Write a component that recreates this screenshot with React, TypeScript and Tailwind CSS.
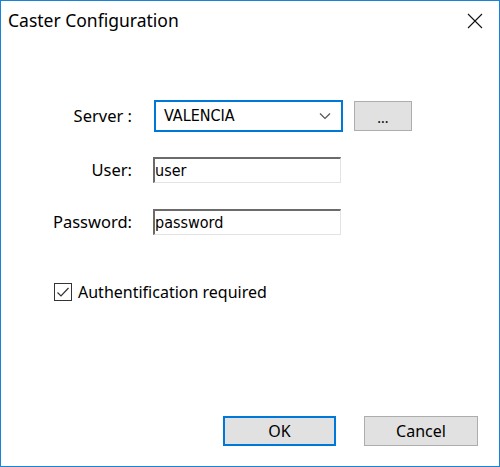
import React from 'react';

const ui = { fontFamily: '"Noto Sans", "Open Sans", sans-serif' };
const field = { fontFamily: '"DejaVu Sans Condensed", "Liberation Sans", sans-serif' };

const Label: React.FC<{ text: string }> = ({ text }) => (
  <div className="w-[92px] text-right text-[16.5px] text-black leading-none" style={ui}>
    {text}
  </div>
);

const TextBox: React.FC<{ value: string }> = ({ value }) => (
  <div
    className="w-[188px] h-[26px] bg-white border-t-2 border-l-2 border-b border-r border-t-[#6b6b6b] border-l-[#6b6b6b] border-b-[#e3e3e3] border-r-[#e3e3e3] flex items-center text-[16px] text-black"
    style={field}
  >
    {value}
  </div>
);

export default function App() {
  return (
    <div className="w-[500px] h-[467px] bg-white border border-[#1883d7] flex flex-col select-none">
      {/* Title bar */}
      <div className="h-[39px] flex items-center justify-between pl-[7px] pr-[16px]">
        <span className="text-[17.5px] text-black" style={ui}>
          Caster Configuration
        </span>
        <svg width="16" height="16" viewBox="0 0 16 16" className="text-[#111]">
          <path d="M1 1 L15 15 M15 1 L1 15" stroke="currentColor" strokeWidth="1.1" fill="none" />
        </svg>
      </div>

      {/* Body */}
      <div className="flex-1 flex flex-col pt-[60px] pb-[20px]">
        {/* Server */}
        <div className="flex items-center pl-[39px] h-[32px]">
          <Label text="Server :" />
          <div className="ml-[22px] w-[189px] h-[32px] border-2 border-[#0078d7] bg-white flex items-center justify-between pl-[8px] pr-[10px]">
            <span className="text-[16px] text-black" style={field}>
              VALENCIA
            </span>
            <svg width="12" height="8" viewBox="0 0 12 8">
              <path d="M1 1.5 L6 6.5 L11 1.5" stroke="#555" strokeWidth="1.2" fill="none" />
            </svg>
          </div>
          <button
            className="ml-[11px] w-[58px] h-[30px] bg-[#e1e1e1] border border-[#adadad] flex items-end justify-center pb-[5px] text-[14px] leading-none text-black"
            style={ui}
          >
            ...
          </button>
        </div>

        {/* User */}
        <div className="flex items-center pl-[39px] mt-[25px]">
          <Label text="User:" />
          <div className="ml-[21px]">
            <TextBox value="user" />
          </div>
        </div>

        {/* Password */}
        <div className="flex items-center pl-[39px] mt-[26px]">
          <Label text="Password:" />
          <div className="ml-[21px]">
            <TextBox value="password" />
          </div>
        </div>

        {/* Checkbox */}
        <div className="flex items-center pl-[53px] mt-[45px] gap-[6px]">
          <div className="w-[18px] h-[18px] border border-[#333] bg-white flex items-center justify-center">
            <svg width="14" height="14" viewBox="0 0 14 14">
              <path d="M1.5 7.5 L5 11 L12.5 3" stroke="#333" strokeWidth="1.2" fill="none" />
            </svg>
          </div>
          <span className="text-[16px] text-black" style={ui}>
            Authentification required
          </span>
        </div>

        <div className="flex-1" />

        {/* Buttons */}
        <div className="flex justify-end pr-[21px] gap-[28px]">
          <button
            className="w-[113px] h-[30px] bg-[#e1e1e1] border-2 border-[#0078d7] text-[16px] text-black flex items-center justify-center"
            style={ui}
          >
            OK
          </button>
          <button
            className="w-[114px] h-[30px] bg-[#e1e1e1] border border-[#adadad] text-[16px] text-black flex items-center justify-center"
            style={ui}
          >
            Cancel
          </button>
        </div>
      </div>
    </div>
  );
}
